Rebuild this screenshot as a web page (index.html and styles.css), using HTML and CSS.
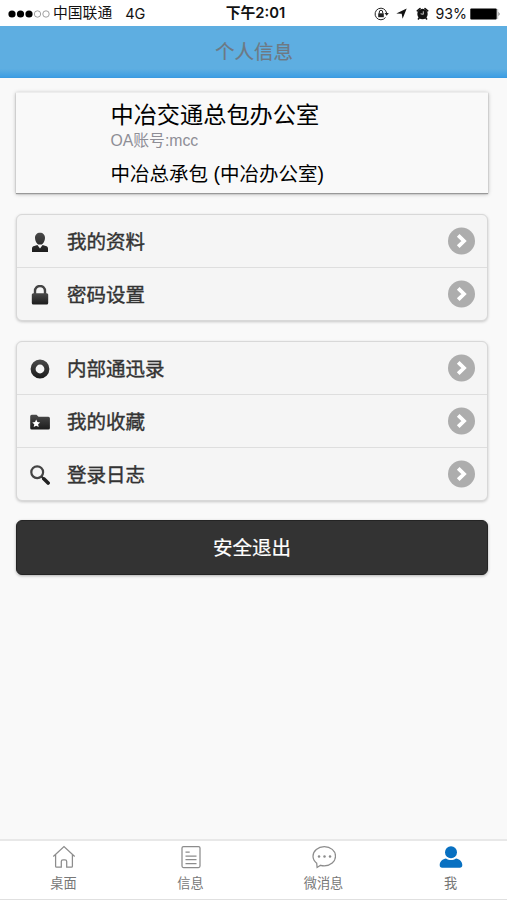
FILE: index.html
```html
<!DOCTYPE html>
<html lang="zh-CN">
<head>
<meta charset="utf-8">
<title>个人信息</title>
<link rel="stylesheet" href="styles.css">
</head>
<body>
<svg class="defs" aria-hidden="true">
  <defs>
    <linearGradient id="ink" x1="0" y1="0" x2="0" y2="1"><stop offset="0" stop-color="#4a4a4a"/><stop offset="1" stop-color="#1c1c1c"/></linearGradient>
    <symbol id="go" viewBox="0 0 28 28"><circle cx="14.500" cy="14" r="13.500" fill="#adadad"/><path d="M11.200 8.300 17 14l-5.800 5.700" fill="none" stroke="#fff" stroke-width="3.800"/></symbol>
  </defs>
</svg>
<div class="screen">
  <div class="status">
    <div class="carrier">
      <svg width="43" height="10" viewBox="0 0 43 10"><g fill="#000"><circle cx="4" cy="5" r="3.600"/><circle cx="12.500" cy="5" r="3.600"/><circle cx="21" cy="5" r="3.600"/></g><g fill="none" stroke="#888" stroke-width=".8"><circle cx="29.500" cy="5" r="3.200"/><circle cx="38" cy="5" r="3.200"/></g></svg>
      <span class="operator">中国联通</span><span class="network">4G</span>
    </div>
    <div class="time">下午2:01</div>
    <div class="indicators">
      <svg class="lock-rot" width="15" height="14" viewBox="0 0 15 14"><path d="M11.500 10.500A5.800 5.800 0 1 1 12.600 6" fill="none" stroke="#222" stroke-width="1"/><path d="M10.500 6h4.300l-2.100 2.700z" fill="#222"/><path d="M4.200 6.300h5.600v3.900H4.200z" fill="#222"/><path d="M5.300 6.500V5a1.700 1.700 0 0 1 3.400 0v1.500" fill="none" stroke="#222" stroke-width="1"/></svg>
      <svg class="arrow" width="11" height="11" viewBox="0 0 11 11"><path d="M10.700.5 6.600 10.700 5.700 5.700.3 5.400z" fill="#111"/></svg>
      <svg class="alarm" width="13" height="13" viewBox="0 0 13 13"><circle cx="6.500" cy="7" r="5.200" fill="#111"/><path d="M1.300 3.800 4 1.500M9 1.500l2.700 2.300M3.300 10.700l-.9 1.200M9.700 10.700l.9 1.200" stroke="#111" stroke-width="1.600" stroke-linecap="round" fill="none"/><path d="M7.300 4.300v3L4.600 6.800" stroke="#ddd" stroke-width=".9" fill="none"/></svg>
      <span class="percent">93%</span>
      <svg width="31" height="12" viewBox="0 0 31 12"><rect x=".3" y=".5" width="26.400" height="11" rx="1" fill="#000"/><path d="M27.700 1v10" stroke="#aaa" stroke-width=".7"/><path d="M28.700 3.800q1.600 2.200 0 4.400z" fill="#222"/></svg>
    </div>
  </div>
  <header class="header"><h1>个人信息</h1></header>
  <main class="content">
    <section class="profile">
      <div class="name">中冶交通总包办公室</div>
      <div class="account">OA账号:mcc</div>
      <div class="dept">中冶总承包 (中冶办公室)</div>
    </section>
    <ul class="list">
      <li><svg class="icon" viewBox="0 0 20 20"><path fill="url(#ink)" d="M10 .7c3 0 5 2 5 5.200 0 2.800-1.700 5.600-3.200 6.600H8.200C6.700 11.500 5 8.700 5 5.900 5 2.700 7 .7 10 .7zM2 20v-3.500c0-1.300 1-2 2.200-2.400L7.400 13l2.600 3.600 2.600-3.600 3.200 1.100c1.200.4 2.200 1.100 2.200 2.400V20z"/></svg><span>我的资料</span><svg class="go"><use href="#go"/></svg></li>
      <li><svg class="icon" viewBox="0 0 20 20"><path d="M5 9V6a5 5 0 0 1 10 0V9" fill="none" stroke="#444" stroke-width="2.400"/><rect x="1.800" y="8.200" width="16.400" height="11.300" rx="1.500" fill="url(#ink)"/></svg><span>密码设置</span><svg class="go"><use href="#go"/></svg></li>
    </ul>
    <ul class="list">
      <li><svg class="icon" viewBox="0 0 20 20"><path fill="url(#ink)" fill-rule="evenodd" d="M10 .6a9.400 9.400 0 1 0 0 18.800A9.400 9.400 0 0 0 10 .6zm0 5a4.400 4.400 0 1 1 0 8.800 4.400 4.400 0 0 1 0-8.800z"/></svg><span>内部通迅录</span><svg class="go"><use href="#go"/></svg></li>
      <li><svg class="icon" viewBox="0 0 20 20"><path fill="url(#ink)" d="M.2 4.300q0-1.500 1.500-1.500h4.800l2 2h9.900q1.500 0 1.500 1.500v9.600q0 1.500-1.500 1.500H1.700q-1.500 0-1.500-1.500z"/><path fill="#fff" d="m6.200 7.500 1.200 2.600 2.800.3-2.100 1.900.6 2.800-2.500-1.400-2.500 1.400.6-2.800-2.100-1.900 2.800-.3z"/></svg><span>我的收藏</span><svg class="go"><use href="#go"/></svg></li>
      <li><svg class="icon" viewBox="0 0 20 20"><circle cx="7.200" cy="7.200" r="5.900" fill="none" stroke="#444" stroke-width="2.200"/><path d="m11.500 11.500 3 3" stroke="#333" stroke-width="2"/><path d="m13.800 13.800 4.300 4.200" stroke="#222" stroke-width="3.600" stroke-linecap="round"/></svg><span>登录日志</span><svg class="go"><use href="#go"/></svg></li>
    </ul>
    <button class="logout" type="button">安全退出</button>
  </main>
  <nav class="tabs">
    <a class="tab"><svg viewBox="0 0 24 24"><path d="M1.300 11.500 12 1.600l10.700 9.900M3.600 9.800v11.400q0 1 1 1h4.700v-5.700q0-1.700 1.700-1.700h2q1.700 0 1.700 1.700v5.700h4.700q1 0 1-1V9.800"/></svg>桌面</a>
    <a class="tab"><svg viewBox="0 0 24 24"><rect x="3" y="1.500" width="18" height="21" rx="1.500"/><path d="M6.500 7h4.200M6.500 11h11M6.500 14.700h11M6.500 18.500h11"/></svg>信息</a>
    <a class="tab"><svg viewBox="0 0 24 24"><path d="M4.700 18.200C2.400 16.500 1 14 1 11.300 1 5.900 6 1.600 12.300 1.600s11.200 4.200 11.200 9.600-5 9.600-11.200 9.600c-1.300 0-2.600-.2-3.700-.5l-3.500 2.200z"/><g class="dots"><circle cx="7" cy="11.400" r="1.250"/><circle cx="12.500" cy="11.400" r="1.250"/><circle cx="18" cy="11.400" r="1.250"/></g></svg>微消息</a>
    <a class="tab active"><svg viewBox="0 0 24 24"><ellipse cx="12" cy="7.300" rx="6" ry="6"/><path d="M.7 20c0-4 3.200-6 6.300-6.600 3 2 7 2 10 0 3.100.6 6.300 2.600 6.300 6.600 0 2-.8 2.700-2.500 2.700H3.200C1.500 22.700.7 22 .7 20z"/></svg>我</a>
  </nav>
</div>
</body>
</html>
```
FILE: styles.css
```css
* { box-sizing: border-box; }
body {
  margin: 0;
  background: #f9f9f9;
  color: #111;
  font-family: "Liberation Sans", "Noto Sans CJK SC", sans-serif;
}
.defs { display: block; width: 0; height: 0; }
.screen { display: flex; flex-direction: column; height: 900px; }
.status {
  display: grid;
  grid-template-columns: 1fr auto 1fr;
  align-items: center;
  height: 26px;
  padding: 1px 6px 0 8px;
  background: #fff;
  font-family: Inter, "Noto Sans CJK SC", sans-serif;
  font-size: 14.8px;
  line-height: 25px;
  white-space: nowrap;
}
.carrier, .indicators { display: flex; align-items: center; }
.operator { margin-left: 2px; }
.network { margin-left: 13px; font-size: 14.5px; }
.time { padding-left: 2px; font-size: 14.8px; font-weight: 600; }
.indicators { justify-content: flex-end; }
.arrow { margin-left: 7px; }
.alarm { margin-left: 9px; }
.percent { margin: 0 3px 0 7px; font-size: 14.2px; }
.header {
  height: 52px;
  border-bottom: 1px solid #3b9ae0;
  background: linear-gradient(#5eaee1 0, #5eaee1 84%, #3d9ee3 100%);
  text-align: center;
}
.header h1 {
  margin: 0;
  padding-left: 1px;
  color: #6e7983;
  font-size: 19.5px;
  font-weight: 400;
  line-height: 52px;
  -webkit-text-stroke: .2px;
}
.content { flex: 1; padding: 14px 19px 0 16px; }
.profile {
  height: 101px;
  padding: 8px 0 0 94.5px;
  border-top: 1px solid #ededed;
  background: #f9f9f9;
  box-shadow: 0 1px 1px #999, 0 1px 4px rgba(0, 0, 0, .3);
}
.name { color: #000; font-size: 23.2px; line-height: 28px; }
.account { color: #8e8e96; font-size: 15.8px; line-height: 24px; }
.dept { margin-top: 7px; color: #000; font-size: 19.5px; line-height: 28px; }
.list {
  margin: 21px 0 0;
  padding: 0;
  border: 1px solid #d8d8d8;
  border-radius: 6px;
  background: #f5f5f5;
  box-shadow: 0 1px 3px rgba(0, 0, 0, .2);
  list-style: none;
}
.list + .list { margin-top: 20px; }
.list li {
  display: flex;
  align-items: center;
  height: 53px;
  padding: 0 12px 0 13px;
  color: #333;
  font-size: 19.5px;
  line-height: 50px;
  -webkit-text-stroke: .4px;
}
.list li:first-child { height: 52px; }
.list li + li { border-top: 1px solid #dedede; }
.list span { flex: 1; margin-left: 17px; padding-top: 2px; }
.icon { width: 20px; height: 20px; margin-top: 2px; }
.go { width: 28px; height: 28px; }
.logout {
  display: block;
  width: 100%;
  height: 55px;
  margin-top: 19px;
  padding: 1px 0 0;
  border: 1px solid #242424;
  border-radius: 6px;
  background: #333;
  box-shadow: 0 1px 3px rgba(0, 0, 0, .3);
  color: #fff;
  font: 19.5px/52px "Liberation Sans", "Noto Sans CJK SC", sans-serif;
  -webkit-text-stroke: .2px;
}
.tabs {
  display: grid;
  grid-template-columns: 127px 127px 139px 115px;
  height: 61px;
  border-top: 2px solid #e8e8e8;
  border-bottom: 1px solid #e0e0e0;
  background: #fff;
}
.tab {
  display: flex;
  flex-direction: column;
  align-items: center;
  padding-top: 4px;
  color: #777;
  font-size: 13.2px;
  line-height: 30px;
}
.tab svg { width: 24px; height: 24px; fill: none; stroke: #8c8c8c; stroke-width: 1.25; }
.tab .dots { fill: #8c8c8c; stroke: none; }
.tab.active svg { fill: #0870c1; stroke: none; }
```
